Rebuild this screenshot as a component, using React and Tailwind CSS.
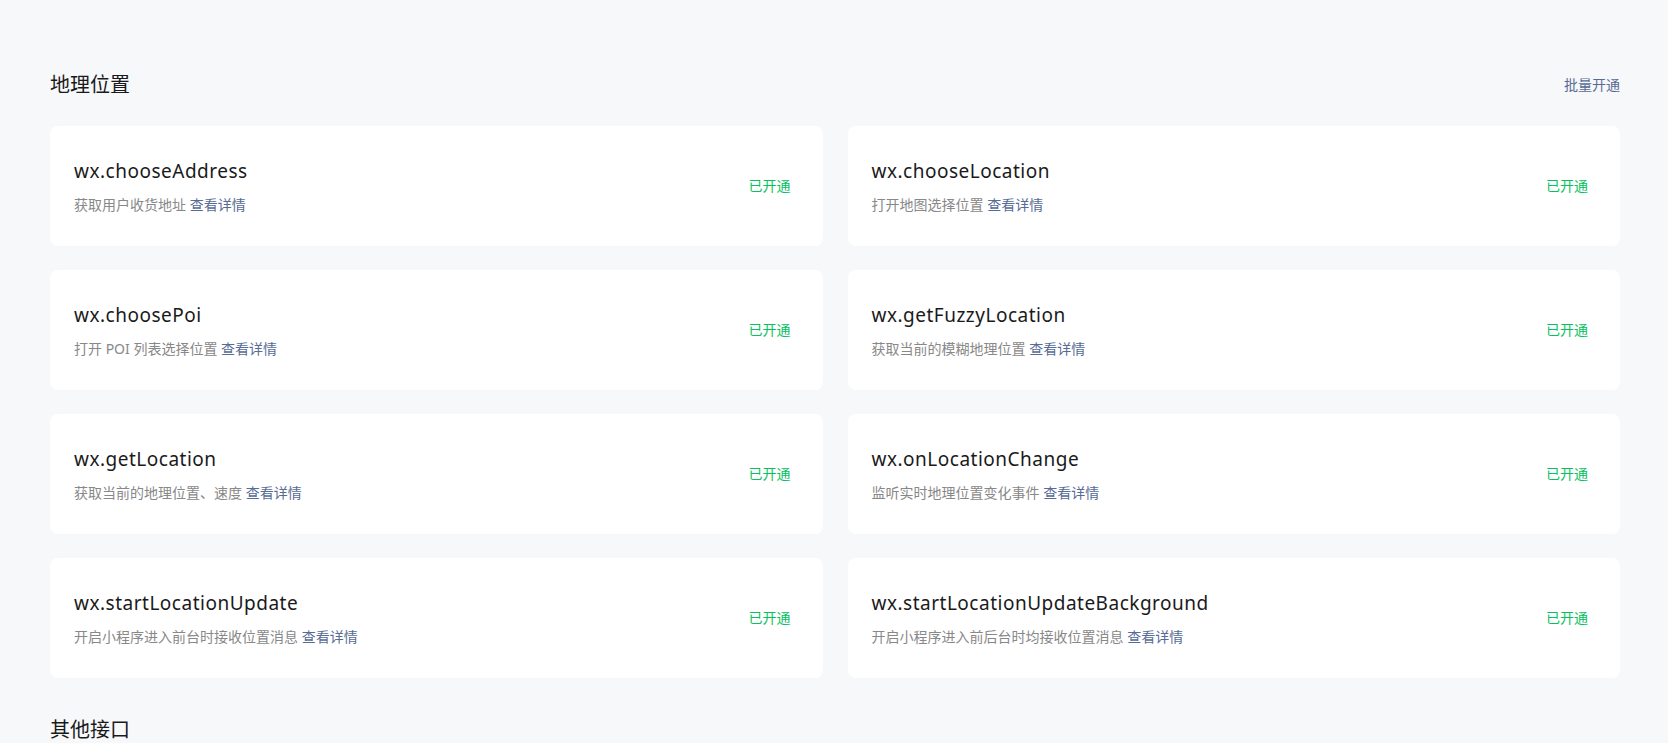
import React from "react";

const items = [
  { name: "wx.chooseAddress", desc: "获取用户收货地址" },
  { name: "wx.chooseLocation", desc: "打开地图选择位置" },
  { name: "wx.choosePoi", desc: "打开 POI 列表选择位置" },
  { name: "wx.getFuzzyLocation", desc: "获取当前的模糊地理位置" },
  { name: "wx.getLocation", desc: "获取当前的地理位置、速度" },
  { name: "wx.onLocationChange", desc: "监听实时地理位置变化事件" },
  { name: "wx.startLocationUpdate", desc: "开启小程序进入前台时接收位置消息" },
  { name: "wx.startLocationUpdateBackground", desc: "开启小程序进入前后台时均接收位置消息" },
];

const font = { fontFamily: '"Noto Sans", "Noto Sans CJK SC", sans-serif' };

export default function App() {
  return (
    <div
      className="w-full h-[743px] overflow-hidden bg-[#f7f8fa] pl-[50px] pr-[48px] pt-[71px]"
      style={font}
    >
      <div className="flex items-center justify-between mb-[27px]">
        <h2 className="text-[20px] leading-[28px] text-[#1a1a1a] font-normal">地理位置</h2>
        <a className="text-[14px] leading-[20px] text-[#576b95] cursor-pointer">批量开通</a>
      </div>
      <div className="grid grid-cols-2 gap-x-[25px] gap-y-[24px]">
        {items.map((it) => (
          <div
            key={it.name}
            className="h-[120px] bg-white rounded-[8px] flex items-center justify-between pl-[24px] pr-[32px]"
          >
            <div className="flex flex-col gap-[10px] pt-[1px]">
              <div className="text-[19px] leading-[26px] tracking-[0.5px] text-[#1a1a1a]">{it.name}</div>
              <div className="text-[14px] leading-[22px] text-[#888]">
                {it.desc} <a className="text-[#576b95] cursor-pointer">查看详情</a>
              </div>
            </div>
            <span className="text-[14px] leading-[20px] text-[#07c160]">已开通</span>
          </div>
        ))}
      </div>
      <h2 className="mt-[38px] text-[20px] leading-[28px] text-[#1a1a1a] font-normal">其他接口</h2>
    </div>
  );
}
